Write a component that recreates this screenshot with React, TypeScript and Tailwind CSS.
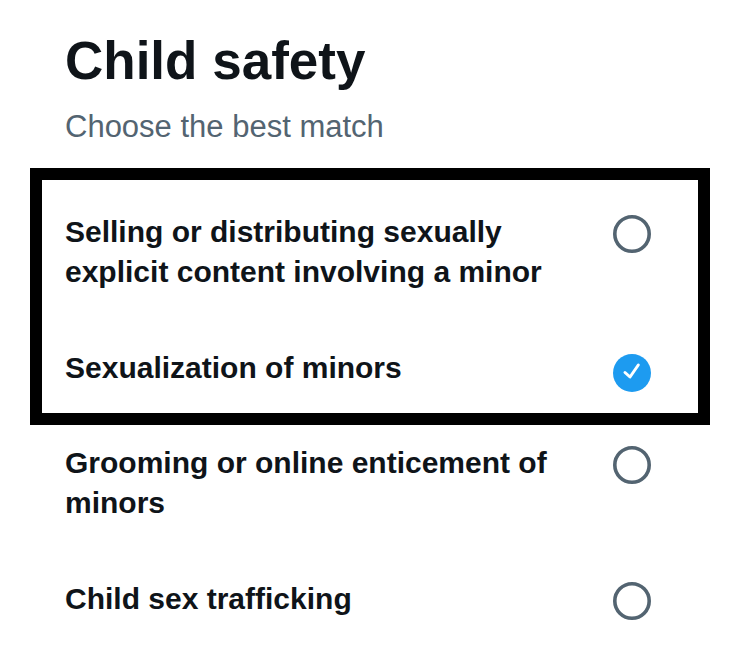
import React from 'react';

type Option = { label: string; checked?: boolean };

const boxed: Option[] = [
  { label: 'Selling or distributing sexually explicit content involving a minor' },
  { label: 'Sexualization of minors', checked: true },
];

const rest: Option[] = [
  { label: 'Grooming or online enticement of minors' },
  { label: 'Child sex trafficking' },
];

const Radio: React.FC<{ checked?: boolean }> = ({ checked }) =>
  checked ? (
    <svg width="38" height="38" viewBox="0 0 38 38" className="shrink-0 mt-[6px]">
      <circle cx="19" cy="19" r="19" fill="#1d9bf0" />
      <path
        d="M12 18.5 L17 23 L25.3 11"
        fill="none"
        stroke="#ffffff"
        strokeWidth="3"
        strokeLinecap="round"
        strokeLinejoin="round"
      />
    </svg>
  ) : (
    <svg width="38" height="38" viewBox="0 0 38 38" className="shrink-0 mt-[3px]">
      <circle cx="19" cy="19" r="17.2" fill="none" stroke="#536471" strokeWidth="3.6" />
    </svg>
  );

const Row: React.FC<{ option: Option }> = ({ option }) => (
  <div className="flex items-start justify-between gap-[23px]">
    <div className="text-[30px] leading-[40px] font-bold text-[#0f1419]">{option.label}</div>
    <Radio checked={option.checked} />
  </div>
);

export default function App() {
  return (
    <div
      className="min-h-screen bg-white pl-[30px] pr-[39px] pt-[31px]"
      style={{ fontFamily: '"Liberation Sans", Arial, sans-serif' }}
    >
      <div className="pl-[35px]">
        <h1 className="text-[53px] leading-[60px] font-bold text-[#0f1419]">Child safety</h1>
        <p className="mt-[18px] text-[31px] leading-[36px] text-[#536471]">Choose the best match</p>
      </div>

      {/* highlighted options */}
      <div className="mt-[23px] border-[12px] border-black pl-[23px] pr-[47px] pt-[32px] pb-[21px] flex flex-col gap-[56px]">
        {boxed.map((o) => (
          <Row key={o.label} option={o} />
        ))}
      </div>

      <div className="mt-[18px] pl-[35px] pr-[59px] flex flex-col gap-[56px]">
        {rest.map((o) => (
          <Row key={o.label} option={o} />
        ))}
      </div>
    </div>
  );
}
